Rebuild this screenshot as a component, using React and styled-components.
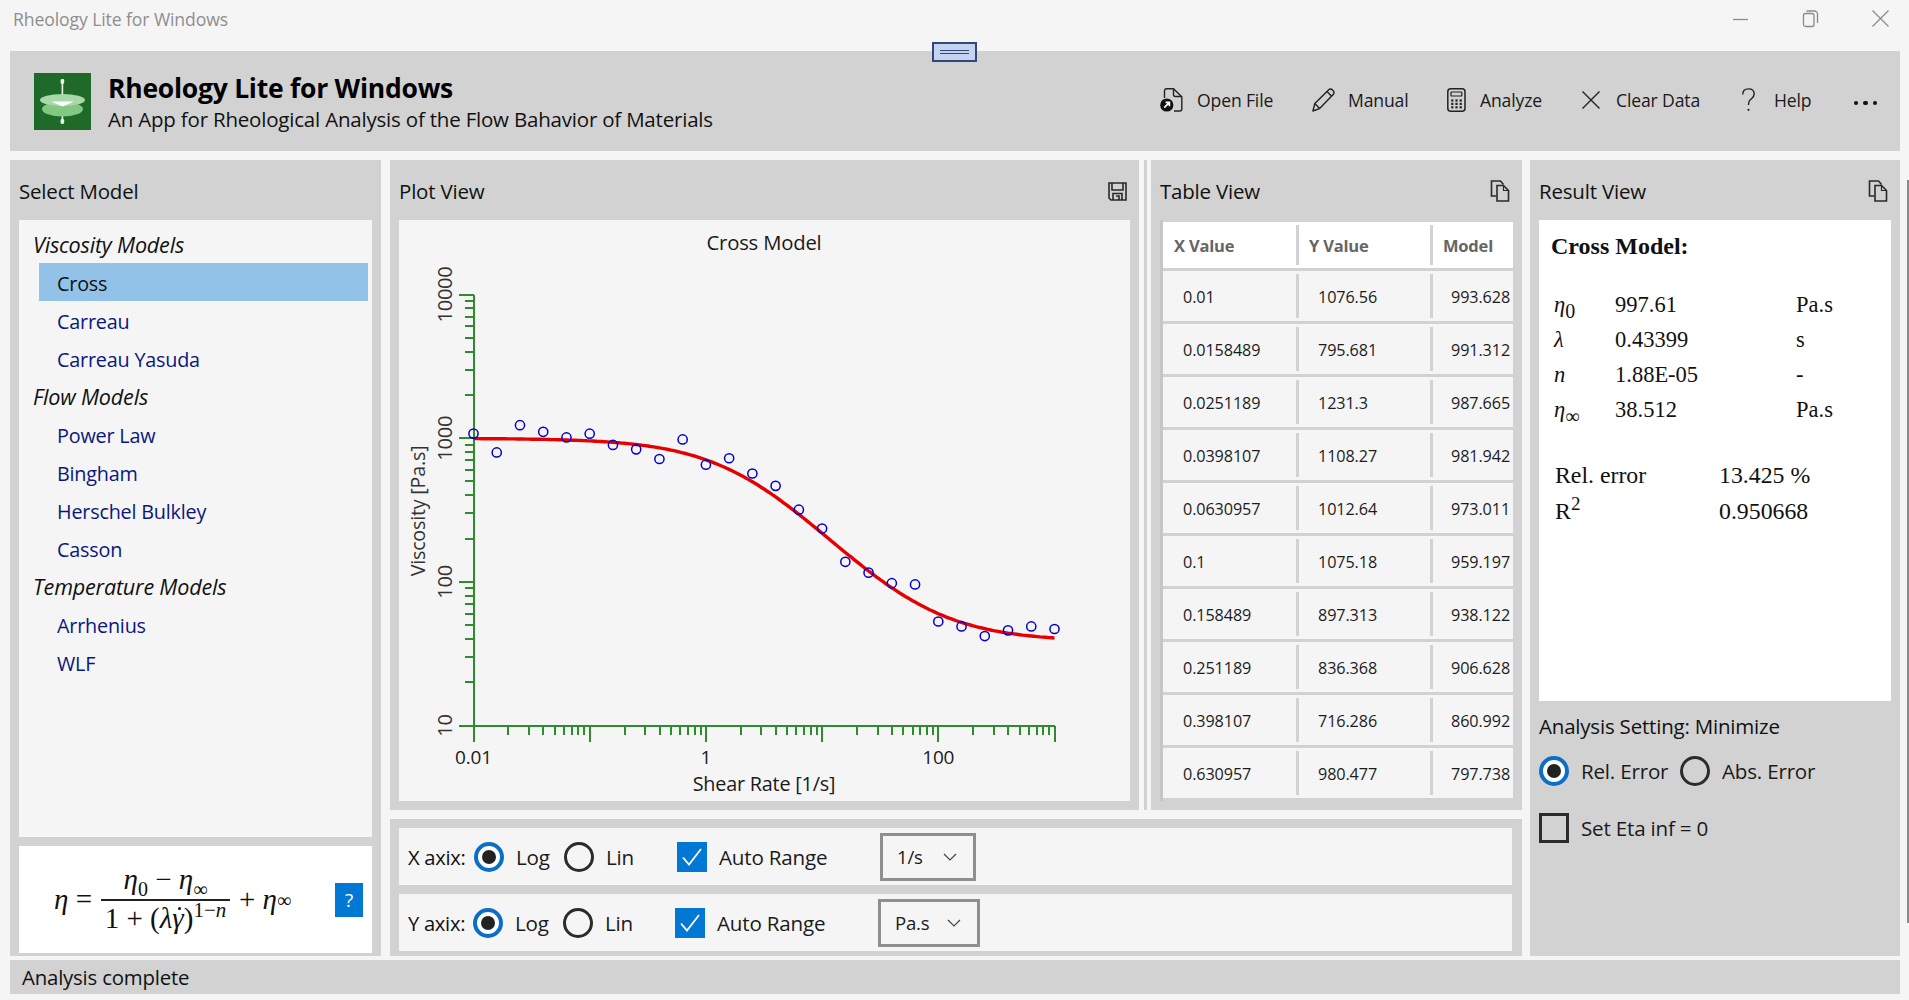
import React from 'react';
import styled, { createGlobalStyle } from 'styled-components';

const GlobalStyle = createGlobalStyle`
    html, body {
        margin: 0;
        padding: 0;
        background: #F5F5F5;
        overflow: hidden;
    }
    * {
        box-sizing: border-box;
    }
`;

const UI_FONT = `"Open Sans", "Noto Sans", sans-serif`;
const SERIF_FONT = `"Liberation Serif", serif`;
const GREY = '#D2D2D2';
const LIGHT = '#F5F5F5';

const Page = styled.div`
    position: relative;
    width: 1909px;
    height: 1000px;
    padding: 0 9px 0 10px;
    background: ${LIGHT};
    font-family: ${UI_FONT};
    color: #1A1A1A;
    overflow: hidden;
`;

//TITLE BAR
const TitleBar = styled.div`
    display: flex;
    align-items: center;
    justify-content: space-between;
    height: 51px;
    padding: 0 11px 13px 3px;
`;

const WindowTitle = styled.span`
    font-size: 17.6px;
    letter-spacing: -0.1px;
    color: #8E8E8E;
`;

const WindowControls = styled.div`
    display: flex;
    gap: 53px;
    color: #8A8A8A;
`;

const GripHandle = styled.div`
    position: absolute;
    left: 932px;
    top: 42px;
    width: 45px;
    height: 20px;
    border: 2px solid #33487A;
    background: #C5D3F0;
    display: flex;
    flex-direction: column;
    justify-content: center;
    gap: 2px;
    padding: 0 6px;
`;

const GripLine = styled.div`
    height: 1px;
    background: #33487A;
`;

const EdgeLine = styled.div`
    position: absolute;
    right: 0;
    top: 180px;
    width: 2px;
    height: 743px;
    background: #8A8A8A;
`;

//HEADER
const Header = styled.header`
    display: flex;
    align-items: center;
    height: 100px;
    padding: 0 23px 0 24px;
    background: ${GREY};
`;

const LogoBox = styled.div`
    display: flex;
    width: 57px;
    height: 57px;
    margin-right: 17px;
`;

const HeaderText = styled.div`
    display: flex;
    flex-direction: column;
    gap: 1px;
    margin-top: 2px;
`;

const AppTitle = styled.h1`
    margin: 0;
    font-size: 26.5px;
    line-height: 34px;
    font-weight: 700;
    letter-spacing: -0.25px;
    color: #000;
`;

const AppSubtitle = styled.p`
    margin: 0;
    font-size: 20.5px;
    line-height: 27px;
    letter-spacing: -0.2px;
    color: #111;
`;

const CommandBar = styled.div`
    display: flex;
    align-items: center;
    margin-left: auto;
    margin-top: -2px;
`;

const Command = styled.div`
    display: flex;
    align-items: center;
    width: ${(p) => p.$w}px;
    gap: ${(p) => p.$gap}px;
    font-size: 17.6px;
    letter-spacing: -0.15px;
    color: #1A1A1A;
`;

const MoreDots = styled.div`
    display: flex;
    gap: 5px;
    width: 23px;
    margin-top: 6px;
`;

const Dot = styled.span`
    width: 4.5px;
    height: 4.5px;
    border-radius: 50%;
    background: #111;
`;

//MAIN
const Main = styled.main`
    display: flex;
    height: 796px;
    margin-top: 9px;
`;

const Panel = styled.section`
    display: flex;
    flex-direction: column;
    width: ${(p) => p.$w}px;
    flex-shrink: 0;
    padding: 0 9px 9px;
    background: ${GREY};
`;

const PanelHead = styled.div`
    display: flex;
    align-items: center;
    justify-content: space-between;
    height: 60px;
    flex-shrink: 0;
    padding: 2px 3px 0 0;
`;

const PanelTitle = styled.h2`
    margin: 0;
    font-size: 20.5px;
    font-weight: 400;
    letter-spacing: -0.2px;
    color: #111;
`;

//SELECT MODEL
const ModelList = styled.div`
    flex: 1;
    padding-top: 5px;
    background: ${LIGHT};
`;

const GroupLabel = styled.div`
    height: 38px;
    line-height: 40px;
    padding-left: 14px;
    font-size: 21.6px;
    font-style: italic;
    letter-spacing: -0.2px;
    color: #111;
`;

const ModelItem = styled.div`
    height: 38px;
    line-height: 41px;
    margin: 0 4px 0 20px;
    padding-left: 18px;
    font-size: 19.8px;
    letter-spacing: -0.2px;
    color: ${(p) => (p.$active ? '#111' : '#0A1780')};
    background: ${(p) => (p.$active ? '#92C2E8' : 'transparent')};
`;

const FormulaBox = styled.div`
    display: flex;
    align-items: center;
    height: 107px;
    margin: 9px 0 -6px;
    padding: 0 9px 0 35px;
    background: #FFF;
    font-family: ${SERIF_FONT};
    font-size: 29px;
    color: #111;
`;

const FormulaVar = styled.i`
    font-style: italic;
`;

const GammaDot = styled.i`
    position: relative;
    font-style: italic;

    &::after {
        content: '';
        position: absolute;
        left: 6px;
        top: 5px;
        width: 3px;
        height: 3px;
        border-radius: 50%;
        background: #111;
    }
`;

const FormulaSub = styled.sub`
    font-size: 20px;
    line-height: 0;
`;

const FormulaSup = styled.sup`
    font-size: 21px;
    line-height: 0;
`;

const Fraction = styled.div`
    display: flex;
    flex-direction: column;
    align-items: center;
    width: 129px;
    margin: 0 9px 0 9px;
    font-size: 29px;
    white-space: nowrap;
`;

const Numerator = styled.div`
    line-height: 31px;
    padding-bottom: 4px;
    border-bottom: 2px solid #222;
    width: 100%;
    text-align: center;
`;

const Denominator = styled.div`
    line-height: 34px;
`;

const HelpButton = styled.button`
    width: 28px;
    height: 34px;
    margin-left: auto;
    padding: 0;
    border: none;
    background: #0078D4;
    color: #FFF;
    font-family: ${UI_FONT};
    font-size: 19px;
`;

//CENTER
const Center = styled.div`
    display: flex;
    flex-direction: column;
    gap: 9px;
    width: 1132px;
    margin: 0 8px 0 9px;
    flex-shrink: 0;
`;

const TopRow = styled.div`
    display: flex;
    height: 650px;
`;

const Splitter = styled.div`
    display: flex;
    justify-content: center;
    width: 12px;
    flex-shrink: 0;
`;

const SplitterBar = styled.div`
    width: 3px;
    background: ${GREY};
`;

const PlotCanvas = styled.div`
    display: flex;
    flex: 1;
    background: ${LIGHT};
`;

const ChartText = styled.text`
    font-family: ${UI_FONT};
    font-size: ${(p) => p.$size || 18}px;
    fill: ${(p) => p.$fill || '#1A1A1A'};
    letter-spacing: -0.2px;
`;

//TABLE
const TableBox = styled.div`
    flex: 1;
    padding-top: 2px;
    border-left: 3px solid #C6C6C6;
    overflow: hidden;
`;

const TableRow = styled.div`
    display: grid;
    grid-template-columns: 136px 134px 1fr;
    height: ${(p) => (p.$head ? 49 : 53)}px;
    border-bottom: 3px solid ${GREY};
    background: ${(p) => (p.$head ? '#FFF' : LIGHT)};
`;

const TableCell = styled.div`
    position: relative;
    display: flex;
    align-items: center;
    padding-left: ${(p) => p.$pad}px;
    padding-top: ${(p) => (p.$head ? 0 : 2)}px;
    font-size: ${(p) => (p.$head ? 16.5 : 16.2)}px;
    font-weight: ${(p) => (p.$head ? 700 : 400)};
    letter-spacing: ${(p) => (p.$head ? -0.2 : -0.1)}px;
    color: ${(p) => (p.$head ? '#666' : '#1C1C1C')};
    white-space: nowrap;
    overflow: hidden;

    &:not(:last-child)::after {
        content: '';
        position: absolute;
        right: 0;
        top: 3px;
        bottom: 3px;
        width: 3px;
        background: ${GREY};
    }
`;

//AXIS CONTROLS
const ControlsPanel = styled.div`
    display: flex;
    flex-direction: column;
    gap: 9px;
    height: 137px;
    padding: 9px 10px 5px 9px;
    background: ${GREY};
`;

const AxisRow = styled.div`
    display: flex;
    align-items: center;
    height: 57px;
    padding-left: 9px;
    background: ${LIGHT};
`;

const AxisLabel = styled.span`
    width: ${(p) => p.$w}px;
    font-size: 20.2px;
    letter-spacing: -0.3px;
    color: #111;
`;

const OptionItem = styled.label`
    display: flex;
    align-items: center;
    gap: 12px;
    width: ${(p) => p.$w}px;
    font-size: 20.6px;
    letter-spacing: -0.2px;
    color: #1A1A1A;
`;

const RadioMark = styled.span`
    display: flex;
    align-items: center;
    justify-content: center;
    width: 30px;
    height: 30px;
    flex-shrink: 0;
    border-radius: 50%;
    border: ${(p) => (p.$on ? '4px solid #0B6FC7' : '3px solid #2B2B2B')};
    background: ${(p) => (p.$on ? '#FFF' : 'transparent')};

    &::after {
        content: '';
        display: ${(p) => (p.$on ? 'block' : 'none')};
        width: 14px;
        height: 14px;
        border-radius: 50%;
        background: #222;
    }
`;

const CheckMark = styled.span`
    display: flex;
    align-items: center;
    justify-content: center;
    width: 30px;
    height: 30px;
    flex-shrink: 0;
    border: ${(p) => (p.$on ? 'none' : '3px solid #2B2B2B')};
    background: ${(p) => (p.$on ? '#0078D4' : 'transparent')};
`;

const UnitSelect = styled.div`
    display: flex;
    align-items: center;
    justify-content: space-between;
    width: ${(p) => p.$w}px;
    height: 48px;
    padding: 0 16px 0 14px;
    border: 3px solid #8F8F8F;
    font-size: 18.6px;
    letter-spacing: -0.2px;
    color: #1A1A1A;
`;

//RESULT
const ResultBox = styled.div`
    height: 481px;
    flex-shrink: 0;
    padding: 9px 0 0 12px;
    background: #FFF;
    font-family: ${SERIF_FONT};
    font-size: 22.5px;
    color: #111;
`;

const ResultTitle = styled.div`
    height: 34px;
    line-height: 34px;
    margin-bottom: 24px;
    font-size: 24px;
    font-weight: 700;
`;

const ParamGrid = styled.div`
    display: grid;
    grid-template-columns: 61px 181px auto;
    grid-auto-rows: 35px;
    align-items: center;
    margin-left: 3px;
`;

const ErrorGrid = styled.div`
    display: grid;
    grid-template-columns: 164px auto;
    grid-auto-rows: 36px;
    align-items: center;
    margin: 30px 0 0 4px;
    font-size: 23.8px;
`;

const Greek = styled.i`
    font-style: italic;
`;

const GreekSub = styled.sub`
    font-size: 20px;
    font-style: normal;
    line-height: 0;
`;

const ResultSup = styled.sup`
    font-size: 19px;
    line-height: 0;
`;

const SettingTitle = styled.div`
    margin-top: 10px;
    height: 30px;
    line-height: 31px;
    font-size: 20.5px;
    letter-spacing: -0.2px;
    color: #111;
`;

const SettingRow = styled.div`
    display: flex;
    align-items: center;
    height: 30px;
    margin-top: ${(p) => p.$top}px;
`;

//STATUS
const StatusBar = styled.footer`
    display: flex;
    align-items: center;
    height: 34px;
    margin-top: 4px;
    padding-left: 12px;
    background: ${GREY};
    font-size: 20.4px;
    letter-spacing: -0.2px;
    color: #111;
`;

const AppLogo = () => (
    <svg width="57" height="57" viewBox="0 0 57 57">
        <rect width="57" height="57" fill="#1F6A28" />
        <rect x="27.6" y="8" width="1.6" height="15" fill="#E8F4E8" />
        <rect x="26.6" y="6" width="3.6" height="5" rx="1.4" fill="#E8F4E8" />
        <rect x="27.6" y="42" width="1.6" height="6" fill="#E8F4E8" />
        <rect x="26.6" y="46" width="3.6" height="5" rx="1.4" fill="#E8F4E8" />
        <ellipse cx="28.5" cy="36" rx="20.5" ry="7.5" fill="#82C884" />
        <ellipse cx="28.5" cy="27" rx="22.5" ry="6" fill="#A8D8A8" />
        <path d="M17 28.5 H40 L28.5 33.5 Z" fill="#FFF" />
    </svg>
);

const OpenFileIcon = () => (
    <svg width="23" height="24" viewBox="0 0 23 24" fill="none" stroke="#222" strokeWidth="1.4">
        <path d="M4.5 10 V2.5 A2 2 0 0 1 6.5 .8 H13.5 L21.8 8.8 V21 A2 2 0 0 1 19.8 23 H14" />
        <path d="M13.5 1 V6.5 A2 2 0 0 0 15.5 8.5 H21.5" />
        <circle cx="6.8" cy="17" r="6.6" fill="#111" stroke="none" />
        <path d="M4.2 19.6 L9.2 14.6 M5.6 14.4 H9.4 V18.2" stroke="#FFF" strokeWidth="1.7" />
    </svg>
);

const PencilIcon = () => (
    <svg width="23" height="24" viewBox="0 0 23 24" fill="none" stroke="#222" strokeWidth="1.4" strokeLinejoin="round">
        <path d="M.9 23 L2.8 15.6 L16.5 1.9 Q18.6 0 20.8 2.2 Q23 4.6 21.2 6.6 L7.6 20.6 Z" />
        <path d="M2.8 15.6 L7.6 20.6 M15 3.6 L19.6 8.2" />
    </svg>
);

const CalculatorIcon = () => (
    <svg width="19" height="24" viewBox="0 0 19 24" fill="none" stroke="#222" strokeWidth="1.5">
        <rect x=".8" y=".8" width="17.2" height="22.4" rx="3" />
        <rect x="4" y="4" width="10.8" height="4" rx=".6" strokeWidth="1.2" />
        {[4.2, 8.4, 12.6].map((x) => [11.4, 14.8, 18.2].map((y) => (
            <rect key={`${x}-${y}`} x={x} y={y} width="2.2" height="2.2" fill="#222" stroke="none" />
        )))}
    </svg>
);

const CrossIcon = ({ size = 18, color = '#222', weight = 1.4 }) => (
    <svg width={size} height={size} viewBox="0 0 18 18" fill="none" stroke={color} strokeWidth={weight}>
        <path d="M.5 .5 L17.5 17.5 M17.5 .5 L.5 17.5" />
    </svg>
);

const QuestionIcon = () => (
    <svg width="13" height="24" viewBox="0 0 13 24" fill="none" stroke="#222" strokeWidth="1.4">
        <path d="M.8 6.4 C.8 3 3 .9 6.4 .9 C9.9 .9 12.2 3 12.2 6 C12.2 9.3 9.6 10.4 7.9 12.1 C6.8 13.3 6.5 14.4 6.5 17" />
        <circle cx="6.5" cy="21.8" r="1.1" fill="#222" stroke="none" />
    </svg>
);

const SaveIcon = () => (
    <svg width="19" height="19" viewBox="0 0 19 19" fill="none" stroke="#2A2A2A" strokeWidth="1.6">
        <path d="M1 1 H18 V18 H3 L1 16 Z" />
        <path d="M4 1 V8 H15 V1" />
        <path d="M5 18 V11.5 H14 V18 M8 14 H11 V18" />
    </svg>
);

const CopyIcon = () => (
    <svg width="20" height="22" viewBox="0 0 20 22" fill="none" stroke="#2A2A2A" strokeWidth="1.6">
        <path d="M6.5 16 H1.5 V1 H10.5 L13.5 4.5" />
        <path d="M7 5.5 H13.5 L18.5 10.5 V21 H7 Z" />
        <path d="M13.5 5.5 V10.5 H18.5" strokeWidth="1.2" />
    </svg>
);

const MinimizeIcon = () => (
    <svg width="17" height="18" viewBox="0 0 17 18" fill="none" stroke="currentColor" strokeWidth="1.3">
        <path d="M1 9.5 H16" />
    </svg>
);

const RestoreIcon = () => (
    <svg width="17" height="18" viewBox="0 0 17 18" fill="none" stroke="currentColor" strokeWidth="1.3">
        <rect x="1.5" y="3.5" width="10.5" height="13" rx="2" />
        <path d="M4.5 1 H12.5 A3 3 0 0 1 15.5 4 V13" />
    </svg>
);

const CheckIcon = () => (
    <svg width="22" height="20" viewBox="0 0 22 20" fill="none" stroke="#FFF" strokeWidth="1.8">
        <path d="M2 10.5 L8 17.5 L20 2" />
    </svg>
);

const ChevronIcon = () => (
    <svg width="14" height="8" viewBox="0 0 14 8" fill="none" stroke="#444" strokeWidth="1.2">
        <path d="M1 1 L7 7 L13 1" />
    </svg>
);

// plot numbers, measured in the canvas (0,0 is its top left corner)
const X0 = 74.5;
const X_DEC = 116.2;
const Y10 = 505.6;
const Y_DEC = 143.7;
const AXIS = '#2E8B2E';

const xPos = (v) => X0 + (Math.log10(v) + 2) * X_DEC;
const yPos = (v) => Y10 - (Math.log10(v) - 1) * Y_DEC;

const SAMPLES = [
    1076.56, 795.681, 1231.3, 1108.27, 1012.64, 1075.18, 897.313, 836.368, 716.286, 980.477,
    654, 725, 568, 466, 318, 235, 138, 116, 98, 96, 53, 49, 42, 46, 49, 47,
];

const crossModel = (rate) => (997.61 - 38.512) / (1 + 0.43399 * rate) + 38.512;
const rateAt = (k) => 0.01 * Math.pow(10, k * 0.2);

const curvePoints = Array.from({ length: 201 }, (_, i) => {
    const rate = 0.01 * Math.pow(10, i * 0.025);
    return `${xPos(rate).toFixed(1)},${yPos(crossModel(rate)).toFixed(1)}`;
}).join(' ');

const DECADES_Y = [10, 100, 1000];
const DECADES_X = [0.01, 0.1, 1, 10, 100];
const MULTIPLES = [2, 3, 4, 5, 6, 7, 8, 9];

const Chart = () => (
    <svg width="731" height="581" viewBox="0 0 731 581">
        <ChartText x="365" y="22" textAnchor="middle" dominantBaseline="central" $size={20.3}>Cross Model</ChartText>

        <g stroke={AXIS} strokeWidth="2" fill="none" shapeRendering="crispEdges">
            <path d={`M${X0} ${yPos(10000)} V${Y10} H${xPos(1000)}`} />
            {[10, 100, 1000, 10000].map((v) => (
                <path key={v} d={`M${X0 - 15} ${yPos(v)} H${X0}`} />
            ))}
            {DECADES_Y.map((d) => MULTIPLES.map((m) => (
                <path key={`${d}-${m}`} d={`M${X0 - 9} ${yPos(d * m)} H${X0}`} />
            )))}
            {[...DECADES_X, 1000].map((v) => (
                <path key={v} d={`M${xPos(v)} ${Y10} v16`} />
            ))}
            {DECADES_X.map((d) => MULTIPLES.map((m) => (
                <path key={`${d}-${m}`} d={`M${xPos(d * m)} ${Y10} v9`} />
            )))}
        </g>

        {[10, 100, 1000, 10000].map((v) => (
            <ChartText
                key={v}
                textAnchor="middle"
                dominantBaseline="central"
                transform={`translate(45 ${yPos(v)}) rotate(-90)`}
                $size={20}
                $fill="#333"
            >
                {v}
            </ChartText>
        ))}
        <ChartText textAnchor="middle" dominantBaseline="central" transform="translate(18 291) rotate(-90)" $size={19.7} $fill="#333">
            Viscosity [Pa.s]
        </ChartText>

        {[0.01, 1, 100].map((v) => (
            <ChartText key={v} x={xPos(v)} y="537" textAnchor="middle" dominantBaseline="central" $size={19}>{v}</ChartText>
        ))}
        <ChartText x="365" y="563" textAnchor="middle" dominantBaseline="central" $size={19.8}>Shear Rate [1/s]</ChartText>

        <polyline points={curvePoints} fill="none" stroke="#E60000" strokeWidth="3.4" />
        {SAMPLES.map((v, k) => (
            <circle key={k} cx={xPos(rateAt(k))} cy={yPos(v)} r="4.6" fill="none" stroke="#0000D0" strokeWidth="1.5" />
        ))}
    </svg>
);

const TABLE = [
    ['0.01', '1076.56', '993.628'],
    ['0.0158489', '795.681', '991.312'],
    ['0.0251189', '1231.3', '987.665'],
    ['0.0398107', '1108.27', '981.942'],
    ['0.0630957', '1012.64', '973.011'],
    ['0.1', '1075.18', '959.197'],
    ['0.158489', '897.313', '938.122'],
    ['0.251189', '836.368', '906.628'],
    ['0.398107', '716.286', '860.992'],
    ['0.630957', '980.477', '797.738'],
];

const MODEL_GROUPS = [
    { name: 'Viscosity Models', items: ['Cross', 'Carreau', 'Carreau Yasuda'] },
    { name: 'Flow Models', items: ['Power Law', 'Bingham', 'Herschel Bulkley', 'Casson'] },
    { name: 'Temperature Models', items: ['Arrhenius', 'WLF'] },
];

const AxisControls = ({ label, labelWidth, logWidth, linWidth, unit, selectWidth }) => (
    <AxisRow>
        <AxisLabel $w={labelWidth}>{label}</AxisLabel>
        <OptionItem $w={logWidth}><RadioMark $on />Log</OptionItem>
        <OptionItem $w={linWidth}><RadioMark />Lin</OptionItem>
        <OptionItem $w={203}><CheckMark $on><CheckIcon /></CheckMark>Auto Range</OptionItem>
        <UnitSelect $w={selectWidth}>{unit}<ChevronIcon /></UnitSelect>
    </AxisRow>
);

const App = () => {
    return <Page>
        <GlobalStyle />

        <TitleBar>
            <WindowTitle>Rheology Lite for Windows</WindowTitle>
            <WindowControls>
                <MinimizeIcon />
                <RestoreIcon />
                <CrossIcon size={17} color="currentColor" weight={1.3} />
            </WindowControls>
        </TitleBar>
        <GripHandle><GripLine /><GripLine /></GripHandle>
        <EdgeLine />

        <Header>
            <LogoBox><AppLogo /></LogoBox>
            <HeaderText>
                <AppTitle>Rheology Lite for Windows</AppTitle>
                <AppSubtitle>An App for Rheological Analysis of the Flow Bahavior of Materials</AppSubtitle>
            </HeaderText>
            <CommandBar>
                <Command $w={152} $gap={14}><OpenFileIcon />Open File</Command>
                <Command $w={135} $gap={13}><PencilIcon />Manual</Command>
                <Command $w={135} $gap={14}><CalculatorIcon />Analyze</Command>
                <Command $w={160} $gap={16}><CrossIcon />Clear Data</Command>
                <Command $w={112} $gap={19}><QuestionIcon />Help</Command>
                <MoreDots><Dot /><Dot /><Dot /></MoreDots>
            </CommandBar>
        </Header>

        <Main>
            <Panel $w={371}>
                <PanelHead><PanelTitle>Select Model</PanelTitle></PanelHead>
                <ModelList>
                    {MODEL_GROUPS.map((group) => (
                        <React.Fragment key={group.name}>
                            <GroupLabel>{group.name}</GroupLabel>
                            {group.items.map((item) => (
                                <ModelItem key={item} $active={item === 'Cross'}>{item}</ModelItem>
                            ))}
                        </React.Fragment>
                    ))}
                </ModelList>
                <FormulaBox>
                    <FormulaVar>η</FormulaVar>&nbsp;=
                    <Fraction>
                        <Numerator>
                            <FormulaVar>η</FormulaVar><FormulaSub>0</FormulaSub> − <FormulaVar>η</FormulaVar><FormulaSub>∞</FormulaSub>
                        </Numerator>
                        <Denominator>
                            1 + (<FormulaVar>λ</FormulaVar><GammaDot>γ</GammaDot>)<FormulaSup>1−<FormulaVar>n</FormulaVar></FormulaSup>
                        </Denominator>
                    </Fraction>
                    + <FormulaVar>&nbsp;η</FormulaVar><FormulaSub>∞</FormulaSub>
                    <HelpButton>?</HelpButton>
                </FormulaBox>
            </Panel>

            <Center>
                <TopRow>
                    <Panel $w={749}>
                        <PanelHead><PanelTitle>Plot View</PanelTitle><SaveIcon /></PanelHead>
                        <PlotCanvas><Chart /></PlotCanvas>
                    </Panel>
                    <Splitter><SplitterBar /></Splitter>
                    <Panel $w={371}>
                        <PanelHead><PanelTitle>Table View</PanelTitle><CopyIcon /></PanelHead>
                        <TableBox>
                            <TableRow $head>
                                <TableCell $head $pad={11}>X Value</TableCell>
                                <TableCell $head $pad={10}>Y Value</TableCell>
                                <TableCell $head $pad={10}>Model</TableCell>
                            </TableRow>
                            {TABLE.map((row) => (
                                <TableRow key={row[0]}>
                                    <TableCell $pad={20}>{row[0]}</TableCell>
                                    <TableCell $pad={19}>{row[1]}</TableCell>
                                    <TableCell $pad={18}>{row[2]}</TableCell>
                                </TableRow>
                            ))}
                        </TableBox>
                    </Panel>
                </TopRow>

                <ControlsPanel>
                    <AxisControls label="X axix:" labelWidth={66} logWidth={90} linWidth={113} unit="1/s" selectWidth={96} />
                    <AxisControls label="Y axix:" labelWidth={65} logWidth={90} linWidth={112} unit="Pa.s" selectWidth={102} />
                </ControlsPanel>
            </Center>

            <Panel $w={370}>
                <PanelHead><PanelTitle>Result View</PanelTitle><CopyIcon /></PanelHead>
                <ResultBox>
                    <ResultTitle>Cross Model:</ResultTitle>
                    <ParamGrid>
                        <span><Greek>η</Greek><GreekSub>0</GreekSub></span><span>997.61</span><span>Pa.s</span>
                        <Greek>λ</Greek><span>0.43399</span><span>s</span>
                        <Greek>n</Greek><span>1.88E-05</span><span>-</span>
                        <span><Greek>η</Greek><GreekSub>∞</GreekSub></span><span>38.512</span><span>Pa.s</span>
                    </ParamGrid>
                    <ErrorGrid>
                        <span>Rel. error</span><span>13.425 %</span>
                        <span>R<ResultSup>2</ResultSup></span><span>0.950668</span>
                    </ErrorGrid>
                </ResultBox>
                <SettingTitle>Analysis Setting: Minimize</SettingTitle>
                <SettingRow $top={15}>
                    <OptionItem $w={141}><RadioMark $on />Rel. Error</OptionItem>
                    <OptionItem $w={150}><RadioMark />Abs. Error</OptionItem>
                </SettingRow>
                <SettingRow $top={27}>
                    <OptionItem $w={250}><CheckMark />Set Eta inf = 0</OptionItem>
                </SettingRow>
            </Panel>
        </Main>

        <StatusBar>Analysis complete</StatusBar>
    </Page>
}

export default App;
